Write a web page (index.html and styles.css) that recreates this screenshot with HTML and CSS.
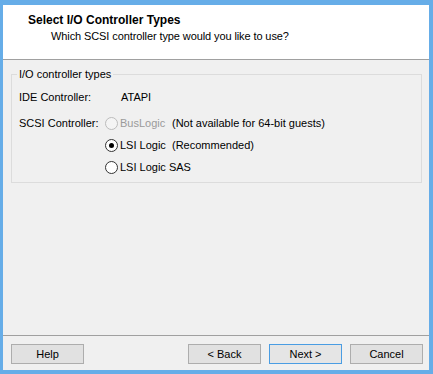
FILE: index.html
```html
<!DOCTYPE html>
<html lang="en">
<head>
    <meta charset="UTF-8">
    <title>Select I/O Controller Types</title>
    <link rel="stylesheet" href="styles.css">
</head>
<body>
    <div class="window">
        <div class="header">
            <div class="title">Select I/O Controller Types</div>
            <div class="subtitle">Which SCSI controller type would you like to use?</div>
        </div>
        <div class="main">
            <fieldset class="group">
                <legend>I/O controller types</legend>
                <div class="grid">
                    <div class="label ide">IDE Controller:</div>
                    <div class="value ide">ATAPI</div>

                    <div class="label">SCSI Controller:</div>
                    <label class="radio disabled"><input type="radio" name="scsi" disabled><span>BusLogic</span></label>
                    <div class="note">(Not available for 64-bit guests)</div>

                    <label class="radio"><input type="radio" name="scsi" checked><span>LSI Logic</span></label>
                    <div class="note">(Recommended)</div>

                    <label class="radio wide"><input type="radio" name="scsi"><span>LSI Logic SAS</span></label>
                </div>
            </fieldset>
        </div>
        <div class="footer">
            <button class="btn">Help</button>
            <div class="spacer"></div>
            <button class="btn">&lt; Back</button>
            <button class="btn default">Next &gt;</button>
            <button class="btn">Cancel</button>
        </div>
    </div>
</body>
</html>
```

FILE: styles.css
```css
* {
    box-sizing: border-box;
}

body {
    margin: 0;
    font-family: 'Liberation Sans', Arial, sans-serif;
    font-size: 11px;
    color: #000;
}

.window {
    width: 433px;
    height: 374px;
    display: flex;
    flex-direction: column;
    background-color: #f0f0f0;
    border-style: solid;
    border-color: #66ade8;
    border-width: 5px 4px 4px 3px;
}

.header {
    height: 55px;
    background-color: #fff;
    border-bottom: 1px solid #a0a0a0;
    padding: 7px 0 0 25px;
}

.title {
    font-size: 12px;
    font-weight: bold;
    line-height: 16px;
}

.subtitle {
    line-height: 16px;
    margin-left: 23px;
    letter-spacing: -0.1px;
}

.main {
    flex: 1;
    padding: 8px 7px 0 8px;
}

.group {
    margin: 0;
    border: 1px solid #dcdcdc;
    padding: 0 7px 7px 7px;
}

.group legend {
    padding: 0 2px;
    margin-left: -2px;
    line-height: 13px;
}

.grid {
    display: grid;
    grid-template-columns: 86px 67px auto;
    grid-template-rows: 20px 16px 16px 16px;
    row-gap: 6px;
    align-items: center;
    padding-top: 8px;
}

.label {
    grid-column: 1;
}

.value {
    grid-column: 2 / 4;
    padding-left: 16px;
}

.ide {
    align-self: start;
    line-height: 16px;
}

.radio {
    grid-column: 2;
    display: flex;
    align-items: center;
    gap: 2px;
    white-space: nowrap;
}

.radio.wide {
    grid-column: 2 / 4;
}

.radio input {
    appearance: none;
    -webkit-appearance: none;
    margin: 0;
    width: 13px;
    height: 13px;
    border: 1px solid #333;
    border-radius: 50%;
    background-color: #fff;
    display: grid;
    place-items: center;
}

.radio input:checked::after {
    content: "";
    width: 5px;
    height: 5px;
    border-radius: 50%;
    background-color: #000;
}

.radio.disabled {
    color: #9a9a9a;
}

.radio.disabled input {
    border-color: #bcbcbc;
    background-color: #f4f4f4;
}

.note {
    grid-column: 3;
    white-space: nowrap;
}

.footer {
    display: flex;
    gap: 8px;
    border-top: 1px solid #a0a0a0;
    padding: 8px 6px 6px 8px;
}

.spacer {
    flex: 1;
}

.btn {
    width: 73px;
    height: 20px;
    margin: 0;
    padding: 0;
    font-family: inherit;
    font-size: 11px;
    color: #000;
    background-color: #e1e1e1;
    border: 1px solid #adadad;
}

.btn.default {
    border-color: #4a9de3;
    background-color: #e5e5e5;
}
```
